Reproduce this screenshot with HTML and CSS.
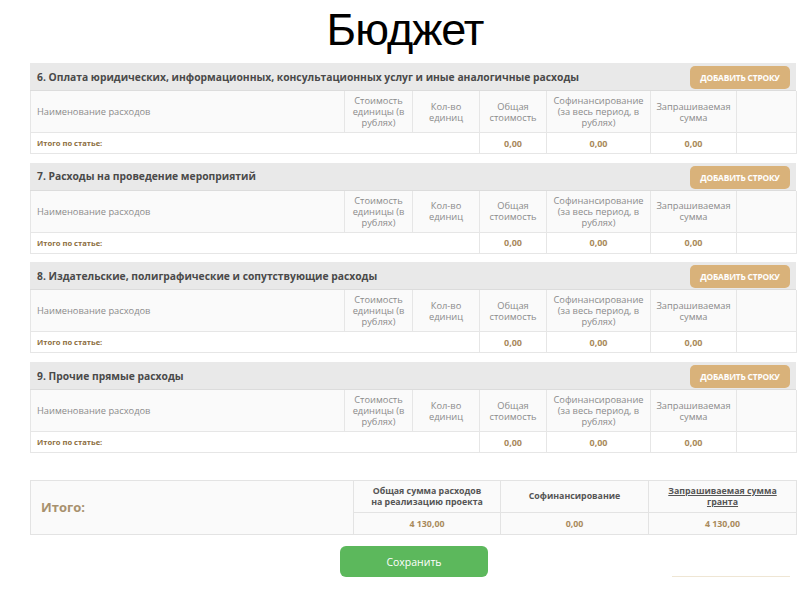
FILE: index.html
```html
<!DOCTYPE html>
<html lang="ru">
<head>
    <meta charset="UTF-8">
    <meta name="viewport" content="width=device-width, initial-scale=1.0">
    <title>Бюджет</title>
    <link rel="stylesheet" href="styles.css">
</head>
<body>
    <h1 class="page-title">Бюджет</h1>
    <div class="container">
        <div class="section">
            <div class="section-head">
                <span>6. Оплата юридических, информационных, консультационных услуг и иные аналогичные расходы</span>
                <button class="btn-add">ДОБАВИТЬ СТРОКУ</button>
            </div>
            <table class="budget">
                <colgroup>
                    <col class="c-name"><col class="c-cost"><col class="c-qty"><col class="c-total"><col class="c-cofin"><col class="c-req"><col class="c-last">
                </colgroup>
                <tr class="head-row">
                    <td class="name">Наименование расходов</td>
                    <td>Стоимость единицы (в рублях)</td>
                    <td>Кол-во единиц</td>
                    <td>Общая стоимость</td>
                    <td>Софинансирование (за весь период, в рублях)</td>
                    <td>Запрашиваемая сумма</td>
                    <td></td>
                </tr>
                <tr class="sum-row">
                    <td class="label" colspan="3">Итого по статье:</td>
                    <td>0,00</td>
                    <td>0,00</td>
                    <td>0,00</td>
                    <td></td>
                </tr>
            </table>
        </div>

        <div class="section">
            <div class="section-head">
                <span>7. Расходы на проведение мероприятий</span>
                <button class="btn-add">ДОБАВИТЬ СТРОКУ</button>
            </div>
            <table class="budget">
                <colgroup>
                    <col class="c-name"><col class="c-cost"><col class="c-qty"><col class="c-total"><col class="c-cofin"><col class="c-req"><col class="c-last">
                </colgroup>
                <tr class="head-row">
                    <td class="name">Наименование расходов</td>
                    <td>Стоимость единицы (в рублях)</td>
                    <td>Кол-во единиц</td>
                    <td>Общая стоимость</td>
                    <td>Софинансирование (за весь период, в рублях)</td>
                    <td>Запрашиваемая сумма</td>
                    <td></td>
                </tr>
                <tr class="sum-row">
                    <td class="label" colspan="3">Итого по статье:</td>
                    <td>0,00</td>
                    <td>0,00</td>
                    <td>0,00</td>
                    <td></td>
                </tr>
            </table>
        </div>

        <div class="section">
            <div class="section-head">
                <span>8. Издательские, полиграфические и сопутствующие расходы</span>
                <button class="btn-add">ДОБАВИТЬ СТРОКУ</button>
            </div>
            <table class="budget">
                <colgroup>
                    <col class="c-name"><col class="c-cost"><col class="c-qty"><col class="c-total"><col class="c-cofin"><col class="c-req"><col class="c-last">
                </colgroup>
                <tr class="head-row">
                    <td class="name">Наименование расходов</td>
                    <td>Стоимость единицы (в рублях)</td>
                    <td>Кол-во единиц</td>
                    <td>Общая стоимость</td>
                    <td>Софинансирование (за весь период, в рублях)</td>
                    <td>Запрашиваемая сумма</td>
                    <td></td>
                </tr>
                <tr class="sum-row">
                    <td class="label" colspan="3">Итого по статье:</td>
                    <td>0,00</td>
                    <td>0,00</td>
                    <td>0,00</td>
                    <td></td>
                </tr>
            </table>
        </div>

        <div class="section">
            <div class="section-head">
                <span>9. Прочие прямые расходы</span>
                <button class="btn-add">ДОБАВИТЬ СТРОКУ</button>
            </div>
            <table class="budget">
                <colgroup>
                    <col class="c-name"><col class="c-cost"><col class="c-qty"><col class="c-total"><col class="c-cofin"><col class="c-req"><col class="c-last">
                </colgroup>
                <tr class="head-row">
                    <td class="name">Наименование расходов</td>
                    <td>Стоимость единицы (в рублях)</td>
                    <td>Кол-во единиц</td>
                    <td>Общая стоимость</td>
                    <td>Софинансирование (за весь период, в рублях)</td>
                    <td>Запрашиваемая сумма</td>
                    <td></td>
                </tr>
                <tr class="sum-row">
                    <td class="label" colspan="3">Итого по статье:</td>
                    <td>0,00</td>
                    <td>0,00</td>
                    <td>0,00</td>
                    <td></td>
                </tr>
            </table>
        </div>

        <table class="grand">
            <colgroup>
                <col class="g-label"><col class="g-all"><col class="g-cofin"><col class="g-req">
            </colgroup>
            <tr class="g-head">
                <td class="g-title" rowspan="2">Итого:</td>
                <td class="g-wide">Общая сумма расходов на реализацию проекта</td>
                <td>Софинансирование</td>
                <td><a href="#">Запрашиваемая сумма гранта</a></td>
            </tr>
            <tr class="g-values">
                <td>4 130,00</td>
                <td>0,00</td>
                <td>4 130,00</td>
            </tr>
        </table>

        <div class="actions">
            <button class="btn-save">Сохранить</button>
            <span class="tail-line"></span>
        </div>
    </div>
</body>
</html>
```

FILE: styles.css
```css
body {
    margin: 0;
    padding: 0;
    background-color: #fff;
    font-family: "Open Sans", "Noto Sans", sans-serif;
}

.page-title {
    margin: 0;
    height: 63px;
    line-height: 60px;
    text-align: center;
    padding-left: 10px;
    font-family: "Liberation Sans", Arial, sans-serif;
    font-weight: normal;
    font-size: 45px;
    letter-spacing: -1px;
    color: #000;
}

.container {
    width: 766px;
    margin-left: 30px;
}

.section {
    margin-bottom: 8.7px;
}

.section-head {
    display: flex;
    align-items: center;
    justify-content: space-between;
    height: 27px;
    padding: 0 6px 0 7px;
    background-color: #e9e9e9;
    border-bottom: 1px solid #dcdcdc;
    font-size: 10.3px;
    font-weight: bold;
    color: #4a4a4a;
}

.btn-add {
    height: 23px;
    width: 100px;
    margin-top: 2px;
    padding: 0;
    border: none;
    border-radius: 5px;
    background-color: #d9b27a;
    color: #fff;
    font-family: "Open Sans", sans-serif;
    font-weight: bold;
    font-size: 8.4px;
    letter-spacing: -0.2px;
}

.budget {
    width: 100%;
    border-collapse: collapse;
    table-layout: fixed;
}

.budget td {
    border: 1px solid #e6e6e6;
    padding: 0 3px;
    text-align: center;
    vertical-align: middle;
}

.budget tr:first-child td {
    border-top: none;
}

.c-name { width: 314px; }
.c-cost { width: 68px; }
.c-qty { width: 67px; }
.c-total { width: 67px; }
.c-cofin { width: 104px; }
.c-req { width: 86px; }
.c-last { width: 60px; }

.head-row td {
    height: 41px;
    background-color: #fafafa;
    font-size: 9.3px;
    line-height: 11px;
    color: #8a8a8a;
}

.head-row td.name {
    text-align: left;
    padding-left: 6px;
}

.sum-row td {
    height: 20px;
    background-color: #fff;
    font-size: 9px;
    font-weight: bold;
    color: #a98a5c;
}

.sum-row td.label {
    text-align: left;
    padding-left: 6px;
    font-size: 7.6px;
    color: #8c6d40;
}

.grand {
    width: 100%;
    margin-top: 27px;
    border-collapse: collapse;
    table-layout: fixed;
    background-color: #fafafa;
}

.grand td {
    border: 1px solid #e3e3e3;
    text-align: center;
    vertical-align: middle;
    padding: 0 4px;
}

.grand td.g-wide {
    padding: 0 12px;
}

.g-label { width: 323px; }
.g-all { width: 147px; }
.g-cofin { width: 148px; }
.g-req { width: 148px; }

.grand td.g-title {
    text-align: left;
    padding-left: 10px;
    font-size: 13px;
    font-weight: bold;
    color: #a8916e;
}

.g-head td {
    height: 31px;
    font-size: 8.8px;
    line-height: 11px;
    font-weight: bold;
    color: #555;
}

.g-head a {
    color: #555;
    text-decoration: underline;
}

.g-values td {
    height: 21px;
    font-size: 8.8px;
    font-weight: bold;
    color: #a98a5c;
}

.actions {
    display: flex;
    align-items: flex-end;
    margin-top: 11px;
    padding-left: 310px;
}

.btn-save {
    width: 148px;
    height: 31px;
    border: none;
    border-radius: 6px;
    background-color: #5cb85c;
    color: #fff;
    font-family: "Open Sans", sans-serif;
    font-size: 10.5px;
}

.tail-line {
    display: block;
    width: 118px;
    height: 2px;
    margin-left: 184px;
    margin-bottom: -1px;
    background-color: #efe6d4;
}
```
